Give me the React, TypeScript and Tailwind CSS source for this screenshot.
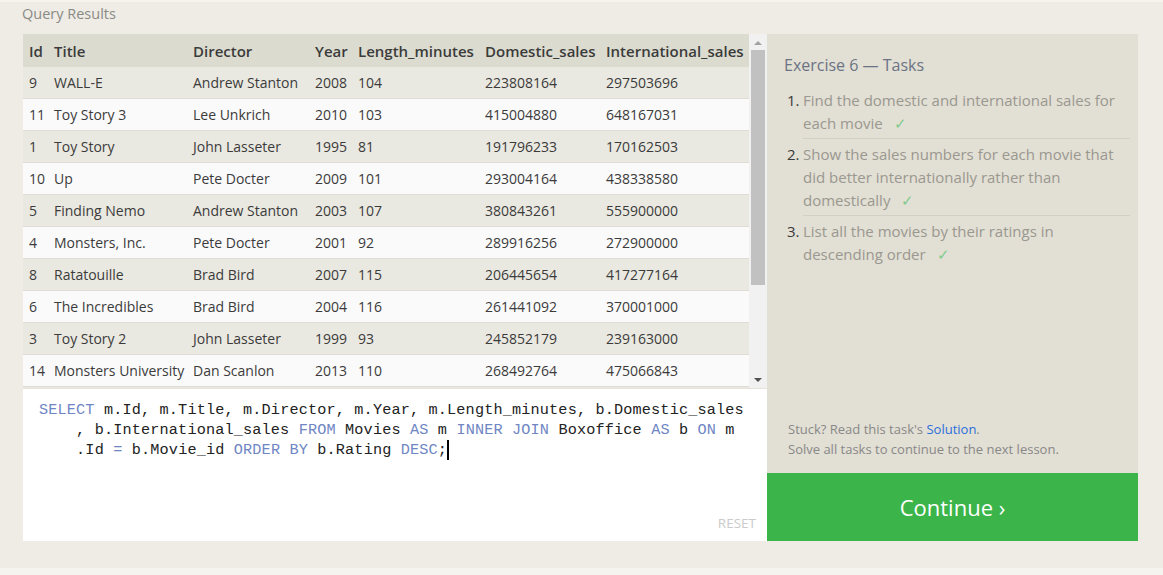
const rows = [
  ["9", "WALL-E", "Andrew Stanton", "2008", "104", "223808164", "297503696"],
  ["11", "Toy Story 3", "Lee Unkrich", "2010", "103", "415004880", "648167031"],
  ["1", "Toy Story", "John Lasseter", "1995", "81", "191796233", "170162503"],
  ["10", "Up", "Pete Docter", "2009", "101", "293004164", "438338580"],
  ["5", "Finding Nemo", "Andrew Stanton", "2003", "107", "380843261", "555900000"],
  ["4", "Monsters, Inc.", "Pete Docter", "2001", "92", "289916256", "272900000"],
  ["8", "Ratatouille", "Brad Bird", "2007", "115", "206445654", "417277164"],
  ["6", "The Incredibles", "Brad Bird", "2004", "116", "261441092", "370001000"],
  ["3", "Toy Story 2", "John Lasseter", "1999", "93", "245852179", "239163000"],
  ["14", "Monsters University", "Dan Scanlon", "2013", "110", "268492764", "475066843"],
  ["2", "A Bug's Life", "John Lasseter", "1998", "95", "162798565", "200600000"],
];

const headers = ["Id", "Title", "Director", "Year", "Length_minutes", "Domestic_sales", "International_sales"];
const widths = ["w-[25px]", "w-[139px]", "w-[122px]", "w-[43px]", "w-[127px]", "w-[121px]", "w-[149px]"];

const tasks = [
  "Find the domestic and international sales for each movie",
  "Show the sales numbers for each movie that did better internationally rather than domestically",
  "List all the movies by their ratings in descending order",
];

function K({ children }: { children: React.ReactNode }) {
  return <span className="text-[#6f86c4]">{children}</span>;
}

export default function App() {
  return (
    <div className="w-[1163px] h-[575px] bg-[#f5f4ef] font-['Open_Sans',sans-serif] overflow-hidden">
      <div className="h-[568px] bg-[#eeece5] border-t-2 border-[#f5f4ef] pl-[23px]">
        <div className="h-[32px] pt-[1px] text-[14.5px] text-[#8a8a85] -ml-px">Query Results</div>
        <div className="flex w-[1115px]">
          {/* left */}
          <div className="w-[744px] flex flex-col">
            <div className="h-[354px] flex overflow-hidden">
              <div className="w-[726px] overflow-hidden">
                <div className="flex h-[33px] pt-[2px] items-center bg-[#dcdbd0] font-semibold text-[15px] text-[#3b3b3b]">
                  {headers.map((h, i) => (
                    <div key={h} className={`${widths[i]} pl-[6px] shrink-0 whitespace-nowrap`}>{h}</div>
                  ))}
                </div>
                {rows.map((r, ri) => (
                  <div
                    key={ri}
                    className={`flex h-[32px] items-center text-[14px] text-[#3b3b3b] border-b border-[#dedcd4] ${ri % 2 === 0 ? "bg-[#eae9e1]" : "bg-[#fafafa]"}`}
                  >
                    {r.map((c, i) => (
                      <div key={i} className={`${widths[i]} pl-[6px] shrink-0 whitespace-nowrap`}>{c}</div>
                    ))}
                  </div>
                ))}
              </div>
              {/* scrollbar */}
              <div className="w-[18px] bg-[#f1f1f1] flex flex-col items-center">
                <div className="h-[16px] flex items-center justify-center">
                  <svg width="8" height="5" viewBox="0 0 8 5"><path d="M0 5 L4 1 L8 5 Z" fill="#a3a3a3" /></svg>
                </div>
                <div className="w-[14px] h-[235px] bg-[#c1c1c1]" />
                <div className="flex-1" />
                <div className="h-[16px] flex items-center justify-center">
                  <svg width="8" height="5" viewBox="0 0 8 5"><path d="M0 0 L4 4 L8 0 Z" fill="#505050" /></svg>
                </div>
              </div>
            </div>
            <div className="h-[153px] bg-white border-t border-[#e4e2da] relative pt-[11px] pl-[16px] font-['Liberation_Mono',monospace] text-[15.2px] tracking-[0.16px] leading-[20px] text-[#222] whitespace-pre">
              <div>
                <K>SELECT</K> m.Id, m.Title, m.Director, m.Year, m.Length_minutes, b.Domestic_sales
              </div>
              <div>
                {"    , b.International_sales "}<K>FROM</K> Movies <K>AS</K> m <K>INNER JOIN</K> Boxoffice <K>AS</K> b <K>ON</K> m
              </div>
              <div className="flex items-center">
                {"    .Id "}<K>=</K>{" b.Movie_id "}<K>ORDER BY</K>{" b.Rating "}<K>DESC</K>;
                <span className="inline-block w-[2px] h-[20px] bg-black" />
              </div>
              <div className="absolute right-[11px] bottom-[8px] font-['Open_Sans',sans-serif] tracking-normal text-[13.5px] text-[#cbcbcb]">RESET</div>
            </div>
          </div>
          {/* right */}
          <div className="w-[371px] flex flex-col">
            <div className="h-[439px] bg-[#e2dfd4] flex flex-col pl-[17px] pr-[8px] pt-[20px] pb-[14px]">
              <div className="text-[16px] text-[#6b7384] leading-[22px]">Exercise 6 — Tasks</div>
              <ol className="mt-[9px]">
                {tasks.map((t, i) => (
                  <li key={i} className="flex pt-[4px]">
                    <span className="w-[19px] pl-[3px] shrink-0 text-[15px] leading-[23px] text-[#3b3b3b]">{i + 1}.</span>
                    <span className={`flex-1 text-[15px] leading-[23px] text-[#9a9890] pb-[3px] ${i < 2 ? "border-b border-[#d2cfc4]" : ""}`}>
                      {t}
                      <span className="ml-[11px] text-[#7fcb8b]">✓</span>
                    </span>
                  </li>
                ))}
              </ol>
              <div className="flex-1" />
              <div className="pl-[4px] text-[13px] leading-[20px] text-[#888]">
                Stuck? Read this task's <span className="text-[#2b6fdc]">Solution</span>.
                <br />
                Solve all tasks to continue to the next lesson.
              </div>
            </div>
            <div className="h-[68px] bg-[#3bb54a] flex items-center justify-center text-white text-[22px]">
              Continue ›
            </div>
          </div>
        </div>
      </div>
    </div>
  );
}
